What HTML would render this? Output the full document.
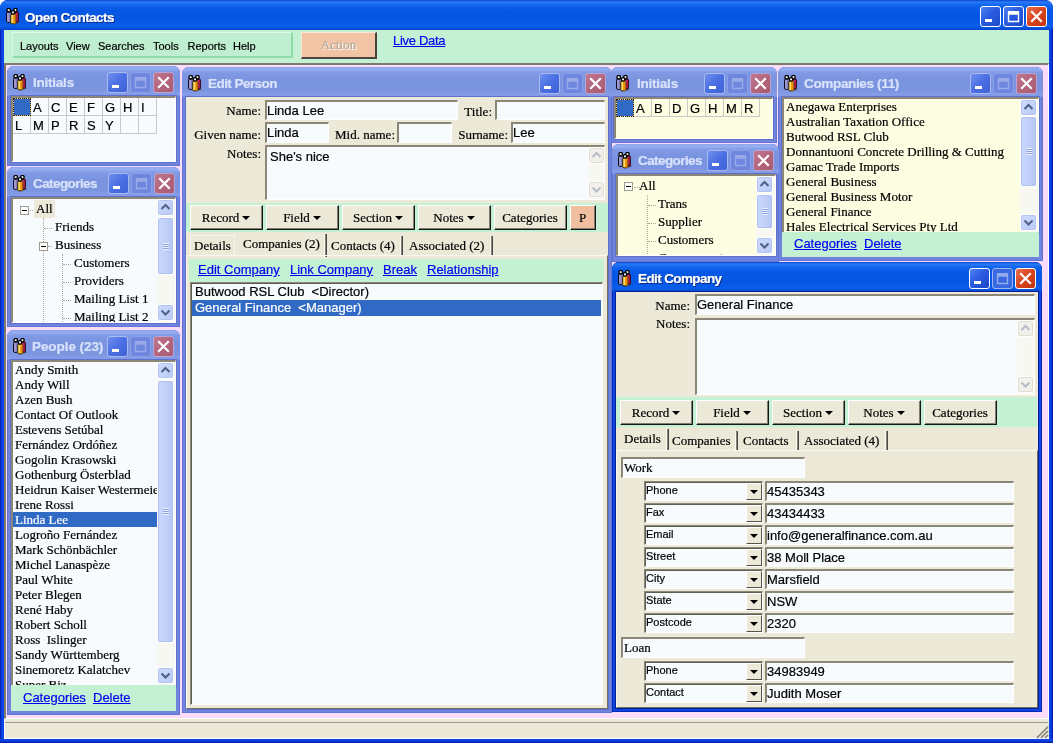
<!DOCTYPE html>
<html>
<head>
<meta charset="utf-8">
<title>Open Contacts</title>
<style>
*{box-sizing:border-box;margin:0;padding:0}
html,body{width:1055px;height:746px;overflow:hidden;background:#fff}
body{font-family:"Liberation Sans",sans-serif;font-size:13px;color:#000;position:relative;-webkit-text-stroke:.2px}
.abs{position:absolute}
#main{will-change:transform;position:absolute;left:0;top:0;width:1053px;height:743px;background:#0a46e0;border-radius:8px 8px 0 0;overflow:hidden}
#mtitle{position:absolute;left:0;top:0;width:1053px;height:30px;background:linear-gradient(#0a44cc 0,#2a7bf8 2px,#1266ee 5px,#0658e4 10px,#0656e2 20px,#0a5fee 26px,#0644cc 30px)}
#lb{position:absolute;left:0;top:30px;width:4px;height:713px;background:linear-gradient(90deg,#0618a0 0,#0a3cdc 1.5px,#0a4cee 3px,#0a40dc 4px)}
#rb{position:absolute;left:1049px;top:30px;width:4px;height:713px;background:linear-gradient(90deg,#0a48f0 0,#0a40e4 1.5px,#0a2cc4 3px,#04129a 4px)}
#bb{position:absolute;left:0;top:739px;width:1053px;height:4px;background:linear-gradient(#0a48f0 0,#0a40e4 1.5px,#0a2cc4 3px,#04129a 4px)}
.cap{position:absolute;font:bold 13.5px "Liberation Sans",sans-serif;white-space:nowrap;letter-spacing:-.55px;color:#fff;text-shadow:1px 1px 0 #0a2a80}
.cb{position:absolute;width:21px;height:21px;border:1px solid #fff;border-radius:3px;background:linear-gradient(135deg,#4f82f0 0,#2a5be0 45%,#1d48c8 100%)}
.cb.x{background:linear-gradient(135deg,#e8704f 0,#d8431c 50%,#c03510 100%)}
.cb svg{position:absolute;left:-1px;top:-1px}
#green{position:absolute;left:4px;top:30px;width:1045px;height:33px;background:#c4f1d4}
#menup{position:absolute;left:12px;top:32px;width:281px;height:26px;background:#c0eed0;border-top:1px solid #dcf9e6;border-left:1px solid #dcf9e6;border-bottom:2px solid #8fdca8;border-right:2px solid #8fdca8}
#menup span{position:absolute;top:7px;font-size:11px;white-space:nowrap}
#mdi{position:absolute;left:4px;top:63px;width:1045px;height:656px;background:#fbdbfa;border-top:2px solid #7d7a70;border-left:2px solid #7d7a70;border-right:1px solid #fff;border-bottom:1px solid #fff}
#status{position:absolute;left:4px;top:719px;width:1045px;height:20px;background:#ece9d8;border-bottom:1px solid #fff;border-left:1px solid #fff}
#status:before{content:"";position:absolute;left:0;top:3px;width:1043px;height:1px;background:#9d9a8c}
/* child windows */
.win{position:absolute;background:#7084de;border-radius:7px 7px 0 0;overflow:hidden;box-shadow:inset 0 0 0 1px #6074d2}
.win.act{background:#0a48e6;box-shadow:inset 0 0 0 1px #0a26b0}
.win .tb{position:absolute;left:0;top:0;right:0;height:30px;background:linear-gradient(#8aa2ea 0,#98b0f2 2px,#8099e4 6px,#7a93df 14px,#7b95e1 24px,#869ee8 28px,#7890e0 30px)}
.win.act .tb{background:linear-gradient(#0a44cc 0,#2a7bf8 2px,#1266ee 5px,#0658e4 10px,#0656e2 20px,#0a5fee 26px,#0644cc 30px)}
.win .cap{color:#d8e2fa;text-shadow:none}
.win.act .cap{color:#fff;text-shadow:1px 1px 0 #0a2a80}
.win .cb{background:linear-gradient(135deg,#6f8fee 0,#4a6fe2 50%,#3f62d6 100%);border-color:#a9baf0}
.win .cb.mx{background:#6e86de;border-color:#8ba1e8}
.win .cb.mx svg{opacity:.3}
.win .cb.x{background:linear-gradient(135deg,#c0788f 0,#b4667d 50%,#a85a72 100%);border-color:#b8a4d4}
.win.act .cb{background:linear-gradient(135deg,#4f82f0 0,#2a5be0 45%,#1d48c8 100%);border-color:#fff}
.win.act .cb.mx{background:#3a68e0;border-color:#9fb8f2}
.win.act .cb.mx svg{opacity:.45}
.win.act .cb.x{background:linear-gradient(135deg,#e8704f 0,#d8431c 50%,#c03510 100%);border-color:#fff}
.body{position:absolute;background:#ece9d8;overflow:hidden}
.sunk{border-top:2px solid #8a8778;border-left:2px solid #8a8778;border-right:1px solid #fff;border-bottom:1px solid #fff;position:absolute}
.sunk:after,.inp:after,.cmb:after{content:'';position:absolute;left:-1px;top:-1px;right:0;bottom:0;border-top:1px solid #5f5c52;border-left:1px solid #5f5c52;pointer-events:none}
.rais{border-right:1px solid #807c70;border-bottom:1px solid #807c70}
.win.act .body{outline:1px solid #0a1c94}
.win .body{outline:1px solid #5e70cc}
.win.act .body{outline:1px solid #0a1c94}
.win .body.mint{outline:none}
.white{background:#f7fbfd}
.yel{background:#fdfde2}
.mint{background:#c4f1d4}
.list{position:absolute;overflow:hidden;font:13px/15px "Liberation Serif",serif;white-space:nowrap}
.list div{height:15px;padding-left:2px}
.sel{background:#316ac5;color:#fff}
.lnk{color:#0000f0;text-decoration:underline;font:13px "Liberation Sans",sans-serif;position:absolute;white-space:nowrap}
/* scrollbar */
.sb{position:absolute;width:18px;background:#f8f8f3}
.sb .a{position:absolute;left:0;width:17px;height:17px;border:1px solid #fff;border-radius:3px;background:linear-gradient(135deg,#d0dcfd,#b9c9f8);box-shadow:0 0 0 1px #b4c4f0 inset}
.sb .t{position:absolute;left:0;width:17px;border:1px solid #fff;border-radius:3px;background:linear-gradient(90deg,#cbd9fd,#b7c7f5);box-shadow:0 0 0 1px #aebff0 inset,-1px -1px 0 0 #98aae6 inset}
.sb svg{position:absolute;left:-1px;top:-1px}
.sb.dis .a{background:#f1f0ea;border-color:#fff;box-shadow:0 0 0 1px #e0ded2 inset}
.sb.dis svg{opacity:.35}
.grip{position:absolute;left:5px;width:6px;height:7px;background:repeating-linear-gradient(#eef3ff 0,#eef3ff 1px,#8da2e0 1px,#8da2e0 2px)}
/* initials grid */
.grid{position:absolute;font:13px/17px "Liberation Sans",sans-serif}
.grid i{position:absolute;width:19px;height:19px;border:1px solid #c8c8c8;font-style:normal;padding-left:2px;padding-top:1px}
.grid i.s{z-index:2;background:#316ac5;border:1px dashed #e8a830;width:18px;height:18px;margin:1px 0 0 1px;background-clip:padding-box;box-shadow:none}
.grid i.s:before{content:'';position:absolute;left:-1px;top:-1px;right:-1px;bottom:-1px;border:1px dotted #222}
/* tree */
.tree{position:absolute;overflow:hidden;font:13px/18px "Liberation Serif",serif;white-space:nowrap}
.tree span{position:absolute}
.tree .pm{position:absolute;width:9px;height:9px;border:1px solid #a09c90;background:#fff}
.tree .pm:after{content:"";position:absolute;left:1px;top:3px;width:5px;height:1px;background:#000}
.tree .h{position:absolute;height:1px;border-top:1px dotted #aaa698}
.tree .v{position:absolute;width:1px;border-left:1px dotted #aaa698}
/* form */
.lbl{position:absolute;font:13px "Liberation Serif",serif;text-align:right;white-space:nowrap}
.inp{position:absolute;background:#f7fbfd;border-top:2px solid #8a8778;border-left:2px solid #8a8778;border-right:1px solid #fff;border-bottom:1px solid #fff;font:13px/18px "Liberation Sans",sans-serif;padding-left:0;white-space:nowrap;overflow:hidden}
.btn{position:absolute;height:25px;background:#ece9d8;border-top:1px solid #fff;border-left:1px solid #fff;border-right:1px solid #161616;border-bottom:1px solid #161616;box-shadow:inset -1px -1px 0 #807c70;font:13px/23px "Liberation Serif",serif;text-align:center;white-space:nowrap;padding-right:1px}
.btn b{display:inline-block;width:0;height:0;border-left:4px solid transparent;border-right:4px solid transparent;border-top:4px solid #000;margin-left:3px;vertical-align:2px}
.tab{position:absolute;font:13px "Liberation Serif",serif;white-space:nowrap}
.tsep{position:absolute;width:3px;background:linear-gradient(90deg,#85827a 0,#85827a 1px,#4e4b44 1px,#4e4b44 2px);border-left:1px solid #fbfaf4}
.tabo{position:absolute;border:1px solid #f8f6ee;border-bottom:none}
.cmb{position:absolute;height:20px;background:#f7fbfd;border-top:2px solid #8a8778;border-left:2px solid #8a8778;border-right:1px solid #fff;border-bottom:1px solid #fff;font:11px/14px "Liberation Sans",sans-serif;padding-left:0}
.cmb u{position:absolute;right:0;top:0;width:16px;height:17px;background:#ece9d8;border-top:1px solid #fff;border-left:1px solid #fff;border-right:1px solid #55524a;border-bottom:1px solid #55524a}
.cmb u:after{content:"";position:absolute;left:3px;top:6px;border-left:4px solid transparent;border-right:4px solid transparent;border-top:4px solid #000}
</style>
</head>
<body>

<svg width="0" height="0" style="position:absolute">
<defs>
<g id="ico">
<path d="M9.5 12 L14 14.2 L10 15.8 L6 15.5 Z" fill="#4a4a4a" opacity=".85"/>
<rect x="0.5" y="4" width="4.6" height="10.4" rx="1.2" fill="#a098d0" stroke="#0a0a1a" stroke-width="1"/>
<rect x="3.2" y="4.5" width="1.8" height="9.6" fill="#7a72b4"/>
<rect x="9" y="4" width="3.4" height="10" rx="1.1" fill="#b81c50" stroke="#2a0410" stroke-width="1"/>
<rect x="9.3" y="5" width="1.2" height="8.6" fill="#d8386c"/>
<rect x="4.8" y="6" width="5" height="9.8" rx="1.2" fill="#f8c010" stroke="#2a1c00" stroke-width="1"/>
<rect x="7.4" y="6.5" width="2.1" height="9" fill="#ea8a10"/>
<rect x="5.6" y="6.8" width="1" height="8.4" fill="#fff0a0"/>
<circle cx="2.7" cy="2.2" r="1.8" fill="#e0e0e0" stroke="#000" stroke-width="1.3"/>
<circle cx="9.4" cy="2.2" r="1.8" fill="#e0e0e0" stroke="#000" stroke-width="1.3"/>
<circle cx="7" cy="4.4" r="1.7" fill="#f4f4f4" stroke="#000" stroke-width="1.3"/>
</g>
<g id="gmin"><rect x="5" y="13" width="7" height="3" fill="#fff"/></g>
<g id="gmax"><path d="M5.5 6.5 H15.5 V15.5 H5.5 Z M5.5 8 H15.5" fill="none" stroke="#fff" stroke-width="1.4"/><rect x="5" y="5" width="11" height="3" fill="#fff"/></g>
<g id="gx"><path d="M6 6 L15 15 M15 6 L6 15" stroke="#fff" stroke-width="2.2" stroke-linecap="square"/></g>
<g id="up"><path d="M4.5 10 L8.5 6 L12.5 10" fill="none" stroke="#4d6185" stroke-width="2"/></g>
<g id="dn"><path d="M4.5 6.5 L8.5 10.5 L12.5 6.5" fill="none" stroke="#4d6185" stroke-width="2"/></g>
</defs>
</svg>

<div id="main">
 <div id="mtitle">
  <svg class="abs" style="left:6px;top:8px" width="17" height="18"><use href="#ico"/></svg>
  <div class="cap" style="left:25px;top:10px;letter-spacing:-.54px">Open Contacts</div>
  <div class="cb" style="left:980px;top:6px;"><svg width="21" height="21"><use href="#gmin"/></svg></div><div class="cb mx" style="left:1003px;top:6px;"><svg width="21" height="21"><use href="#gmax"/></svg></div><div class="cb x" style="left:1026px;top:6px;"><svg width="21" height="21"><use href="#gx"/></svg></div>
 </div>
 <div id="lb"></div><div id="rb"></div><div id="bb"></div>
 <div id="green"></div>
 <div id="menup"><span style="left:7px">Layouts</span><span style="left:53px">View</span><span style="left:85px">Searches</span><span style="left:140px">Tools</span><span style="left:174.5px">Reports</span><span style="left:220px">Help</span></div>
 <div class="abs" style="left:301px;top:32px;width:76px;height:27px;background:#f0c4a4;border-top:1px solid #fbe6d8;border-left:1px solid #fbe6d8;border-right:2px solid #4a443c;border-bottom:2px solid #4a443c;font:13px/24px 'Liberation Serif',serif;text-align:center;color:#b4aa9c;text-shadow:1px 1px 0 #fff">Action</div>
 <div class="lnk" style="left:393px;top:33px;letter-spacing:-.3px">Live Data</div>
 <div id="mdi"></div>
 <div id="status"></div>
 <svg class="abs" style="left:1036px;top:726px" width="13" height="13"><path d="M12 1 L1 12 M12 5 L5 12 M12 9 L9 12" stroke="#8c887a" stroke-width="1.8"/><path d="M12 2.6 L2.6 12 M12 6.6 L6.6 12 M12 10.6 L10.6 12" stroke="#fff" stroke-width=".8"/></svg>
<div class="win" style="left:7px;top:66px;width:173px;height:100px"><div class="tb"><svg class="abs" style="left:6px;top:8px" width="17" height="18"><use href="#ico"/></svg><div class="cap" style="left:26px;top:9px;letter-spacing:-0.23px">Initials</div><div class="cb" style="left:100px;top:6px;"><svg width="21" height="21"><use href="#gmin"/></svg></div><div class="cb mx" style="left:123px;top:6px;"><svg width="21" height="21"><use href="#gmax"/></svg></div><div class="cb x" style="left:146px;top:6px;"><svg width="21" height="21"><use href="#gx"/></svg></div></div><div class="body sunk white" style="left:4px;top:30px;width:165px;height:66px;"><div class="grid" style="left:-1px;top:-1px;"><i class="s" style="left:0px;top:0px"></i><i style="left:18px;top:0px">A</i><i style="left:36px;top:0px">C</i><i style="left:54px;top:0px">E</i><i style="left:72px;top:0px">F</i><i style="left:90px;top:0px">G</i><i style="left:108px;top:0px">H</i><i style="left:126px;top:0px">I</i><i style="left:0px;top:18px">L</i><i style="left:18px;top:18px">M</i><i style="left:36px;top:18px">P</i><i style="left:54px;top:18px">R</i><i style="left:72px;top:18px">S</i><i style="left:90px;top:18px">Y</i><i style="left:108px;top:18px"></i><i style="left:126px;top:18px"></i></div></div></div>
<div class="win" style="left:7px;top:167px;width:173px;height:160px"><div class="tb"><svg class="abs" style="left:6px;top:8px" width="17" height="18"><use href="#ico"/></svg><div class="cap" style="left:26px;top:9px;letter-spacing:-0.58px">Categories</div><div class="cb" style="left:101px;top:6px;"><svg width="21" height="21"><use href="#gmin"/></svg></div><div class="cb mx" style="left:124px;top:6px;"><svg width="21" height="21"><use href="#gmax"/></svg></div><div class="cb x" style="left:147px;top:6px;"><svg width="21" height="21"><use href="#gx"/></svg></div></div><div class="body sunk white" style="left:4px;top:30px;width:165px;height:126px;"><div class="tree" style="left:0px;top:0px;width:145px;height:123px;"><div class="v" style="left:30px;top:19px;width:1px;height:112px;"></div><div class="v" style="left:49px;top:55px;width:1px;height:76px;"></div><div class="h" style="left:17px;top:11px;width:5px;height:1px;"></div><div class="h" style="left:31px;top:29px;width:8px;height:1px;"></div><div class="h" style="left:35px;top:47px;width:4px;height:1px;"></div><div class="h" style="left:50px;top:65px;width:8px;height:1px;"></div><div class="h" style="left:50px;top:83px;width:8px;height:1px;"></div><div class="h" style="left:50px;top:101px;width:8px;height:1px;"></div><div class="h" style="left:50px;top:119px;width:8px;height:1px;"></div><div class="pm" style="left:7px;top:7px;"></div><div class="pm" style="left:26px;top:43px;"></div><span style="left:21px;top:1px;background:#ece9d8;padding:0 2px;height:18px">All</span><span style="left:42px;top:19px">Friends</span><span style="left:42px;top:37px">Business</span><span style="left:61px;top:55px">Customers</span><span style="left:61px;top:73px">Providers</span><span style="left:61px;top:91px">Mailing List 1</span><span style="left:61px;top:109px">Mailing List 2</span></div><div class="sb" style="left:144px;top:0px;width:18px;height:123px;"><div class="a" style="left:0px;top:0px;"><svg width="17" height="17"><use href="#up"/></svg></div><div class="t" style="left:0px;top:18px;width:17px;height:58px;"><div class="grip" style="top:25px"></div></div><div class="a" style="left:0px;top:105px;"><svg width="17" height="17"><use href="#dn"/></svg></div></div></div></div>
<div class="win" style="left:7px;top:330px;width:173px;height:385px"><div class="tb"><svg class="abs" style="left:6px;top:8px" width="17" height="18"><use href="#ico"/></svg><div class="cap" style="left:25px;top:9px;letter-spacing:-0.07px">People (23)</div><div class="cb" style="left:100px;top:6px;"><svg width="21" height="21"><use href="#gmin"/></svg></div><div class="cb mx" style="left:123px;top:6px;"><svg width="21" height="21"><use href="#gmax"/></svg></div><div class="cb x" style="left:146px;top:6px;"><svg width="21" height="21"><use href="#gx"/></svg></div></div><div class="body sunk white" style="left:4px;top:30px;width:165px;height:326px;"><div class="list" style="left:0px;top:0px;width:144px;height:323px;"><div>Andy Smith</div><div>Andy Will</div><div>Azen Bush</div><div>Contact Of Outlook</div><div>Estevens Setúbal</div><div>Fernández Ordóñez</div><div>Gogolin Krasowski</div><div>Gothenburg Österblad</div><div>Heidrun Kaiser Westermeier</div><div>Irene Rossi</div><div class=sel>Linda Lee</div><div>Logroño Fernández</div><div>Mark Schönbächler</div><div>Michel Lanaspèze</div><div>Paul White</div><div>Peter Blegen</div><div>René Haby</div><div>Robert Scholl</div><div>Ross&nbsp; Islinger</div><div>Sandy Württemberg</div><div>Sinemoretz Kalatchev</div><div>Super Biz</div></div><div class="sb" style="left:144px;top:0px;width:18px;height:323px;"><div class="a" style="left:0px;top:0px;"><svg width="17" height="17"><use href="#up"/></svg></div><div class="t" style="left:0px;top:18px;width:17px;height:263px;"><div class="grip" style="top:127px"></div></div><div class="a" style="left:0px;top:305px;"><svg width="17" height="17"><use href="#dn"/></svg></div></div></div><div class="body mint" style="left:4px;top:355px;width:165px;height:26px;"><div class="lnk" style="left:12px;top:5px;">Categories</div><div class="lnk" style="left:82px;top:5px;">Delete</div></div></div>
<div class="win" style="left:182px;top:67px;width:430px;height:646px"><div class="tb"><svg class="abs" style="left:6px;top:8px" width="17" height="18"><use href="#ico"/></svg><div class="cap" style="left:26px;top:9px;letter-spacing:-0.55px">Edit Person</div><div class="cb" style="left:357px;top:6px;"><svg width="21" height="21"><use href="#gmin"/></svg></div><div class="cb mx" style="left:380px;top:6px;"><svg width="21" height="21"><use href="#gmax"/></svg></div><div class="cb x" style="left:403px;top:6px;"><svg width="21" height="21"><use href="#gx"/></svg></div></div><div class="body" style="left:4px;top:30px;width:422px;height:612px;"><div class="lbl" style="left:-15px;width:90px;top:6px">Name:</div><div class="inp" style="left:79px;top:3px;width:193px;height:20px;">Linda Lee</div><div class="lbl" style="left:216px;width:90px;top:7px">Title:</div><div class="inp" style="left:309px;top:3px;width:110px;height:20px;"></div><div class="lbl" style="left:-15px;width:90px;top:30px">Given name:</div><div class="inp" style="left:79px;top:25px;width:64px;height:21px;">Linda</div><div class="lbl" style="left:119px;width:90px;top:30px">Mid. name:</div><div class="inp" style="left:211px;top:25px;width:55px;height:21px;"></div><div class="lbl" style="left:232px;width:90px;top:30px">Surname:</div><div class="inp" style="left:325px;top:25px;width:94px;height:21px;">Lee</div><div class="lbl" style="left:-15px;width:90px;top:49px">Notes:</div><div class="inp" style="left:79px;top:48px;width:340px;height:55px;padding-left:3px;padding-top:1px">She's nice<div class="sb dis" style="left:321px;top:0px;width:18px;height:52px;"><div class="a" style="left:0px;top:0px;"><svg width="17" height="17"><use href="#up"/></svg></div><div class="a" style="left:0px;top:34px;"><svg width="17" height="17"><use href="#dn"/></svg></div></div></div><div class="abs mint" style="left:0px;top:106px;width:422px;height:29px;"></div><div class="btn" style="left:4px;top:108px;width:73px;height:25px;">Record<b></b></div><div class="btn" style="left:80px;top:108px;width:73px;height:25px;">Field<b></b></div><div class="btn" style="left:156px;top:108px;width:73px;height:25px;">Section<b></b></div><div class="btn" style="left:232px;top:108px;width:73px;height:25px;">Notes<b></b></div><div class="btn" style="left:308px;top:108px;width:73px;height:25px;">Categories</div><div class="btn" style="left:384px;top:108px;width:26px;height:25px;background:#f0bfa0">P</div><div class="tabo" style="left:4px;top:138px;width:45px;height:21px;"></div><div class="tab" style="left:8px;top:141px;">Details</div><div class="tab" style="left:57px;top:139px;">Companies (2)</div><div class="tsep" style="left:138px;top:137px;width:3px;height:23px;"></div><div class="tab" style="left:145px;top:141px;">Contacts (4)</div><div class="tsep" style="left:214px;top:139px;width:3px;height:20px;"></div><div class="tab" style="left:223px;top:141px;">Associated (2)</div><div class="tsep" style="left:304px;top:139px;width:3px;height:20px;"></div><div class="abs" style="left:0px;top:158px;width:422px;height:454px;border-top:1px solid #f8f7f0;border-left:1px solid #f8f7f0;border-right:1px solid #716e62;border-bottom:1px solid #716e62"></div><div class="abs mint" style="left:3px;top:162px;width:415px;height:23px;"></div><div class="lnk" style="left:12px;top:165px;">Edit Company</div><div class="lnk" style="left:104px;top:165px;">Link Company</div><div class="lnk" style="left:197px;top:165px;">Break</div><div class="lnk" style="left:241px;top:165px;">Relationship</div><div class="abs sunk white" style="left:4px;top:185px;width:413px;height:423px;font:13px/16px 'Liberation Sans',sans-serif;white-space:nowrap"><div style="padding-left:3px;height:16px">Butwood RSL Club&nbsp; &lt;Director)</div><div class="sel" style="padding-left:3px;height:16px;width:409px">General Finance&nbsp; &lt;Manager)</div></div></div></div>
<div class="win" style="left:611px;top:67px;width:166px;height:76px"><div class="tb"><svg class="abs" style="left:5px;top:8px" width="17" height="18"><use href="#ico"/></svg><div class="cap" style="left:26px;top:9px;letter-spacing:-0.23px">Initials</div><div class="cb" style="left:93px;top:6px;"><svg width="21" height="21"><use href="#gmin"/></svg></div><div class="cb mx" style="left:116px;top:6px;"><svg width="21" height="21"><use href="#gmax"/></svg></div><div class="cb x" style="left:139px;top:6px;"><svg width="21" height="21"><use href="#gx"/></svg></div></div><div class="body sunk yel" style="left:3px;top:30px;width:159px;height:42px;"><div class="grid" style="left:-1px;top:-1px;"><i class="s" style="left:0px;top:0px"></i><i style="left:18px;top:0px">A</i><i style="left:36px;top:0px">B</i><i style="left:54px;top:0px">D</i><i style="left:72px;top:0px">G</i><i style="left:90px;top:0px">H</i><i style="left:108px;top:0px">M</i><i style="left:126px;top:0px">R</i></div></div></div>
<div class="win" style="left:778px;top:67px;width:265px;height:194px"><div class="tb"><svg class="abs" style="left:6px;top:8px" width="17" height="18"><use href="#ico"/></svg><div class="cap" style="left:26px;top:9px;letter-spacing:-0.34px">Companies (11)</div><div class="cb" style="left:192px;top:6px;"><svg width="21" height="21"><use href="#gmin"/></svg></div><div class="cb mx" style="left:215px;top:6px;"><svg width="21" height="21"><use href="#gmax"/></svg></div><div class="cb x" style="left:238px;top:6px;"><svg width="21" height="21"><use href="#gx"/></svg></div></div><div class="body sunk yel" style="left:4px;top:30px;width:257px;height:136px;"><div class="list" style="left:0px;top:0px;width:237px;height:134px;"><div>Anegawa Enterprises</div><div>Australian Taxation Office</div><div>Butwood RSL Club</div><div>Donnantuoni Concrete Drilling &amp; Cutting</div><div>Gamac Trade Imports</div><div>General Business</div><div>General Business Motor</div><div>General Finance</div><div>Hales Electrical Services Pty Ltd</div></div><div class="sb" style="left:236px;top:0px;width:18px;height:133px;"><div class="a" style="left:0px;top:0px;"><svg width="17" height="17"><use href="#up"/></svg></div><div class="t" style="left:0px;top:17px;width:17px;height:71px;"><div class="grip" style="top:31px"></div></div><div class="a" style="left:0px;top:115px;"><svg width="17" height="17"><use href="#dn"/></svg></div></div></div><div class="body mint" style="left:4px;top:165px;width:257px;height:25px;"><div class="lnk" style="left:12px;top:4px;">Categories</div><div class="lnk" style="left:82px;top:4px;">Delete</div></div></div>
<div class="win" style="left:612px;top:144px;width:167px;height:118px"><div class="tb"><svg class="abs" style="left:6px;top:8px" width="17" height="18"><use href="#ico"/></svg><div class="cap" style="left:26px;top:9px;letter-spacing:-0.58px">Categories</div><div class="cb" style="left:95px;top:6px;"><svg width="21" height="21"><use href="#gmin"/></svg></div><div class="cb mx" style="left:118px;top:6px;"><svg width="21" height="21"><use href="#gmax"/></svg></div><div class="cb x" style="left:141px;top:6px;"><svg width="21" height="21"><use href="#gx"/></svg></div></div><div class="body sunk yel" style="left:4px;top:30px;width:160px;height:82px;"><div class="tree" style="left:0px;top:0px;width:138px;height:80px;"><div class="v" style="left:29px;top:19px;width:1px;height:75px;"></div><div class="h" style="left:16px;top:11px;width:6px;height:1px;"></div><div class="h" style="left:30px;top:29px;width:8px;height:1px;"></div><div class="h" style="left:30px;top:47px;width:8px;height:1px;"></div><div class="h" style="left:30px;top:65px;width:8px;height:1px;"></div><div class="h" style="left:30px;top:83px;width:8px;height:1px;"></div><div class="pm" style="left:6px;top:6px;"></div><span style="left:21px;top:1px">All</span><span style="left:40px;top:19px">Trans</span><span style="left:40px;top:37px">Supplier</span><span style="left:40px;top:55px">Customers</span><span style="left:40px;top:73px">Government</span></div><div class="sb" style="left:138px;top:0px;width:18px;height:79px;"><div class="a" style="left:0px;top:0px;"><svg width="17" height="17"><use href="#up"/></svg></div><div class="t" style="left:0px;top:18px;width:17px;height:35px;"><div class="grip" style="top:13px"></div></div><div class="a" style="left:0px;top:61px;"><svg width="17" height="17"><use href="#dn"/></svg></div></div></div></div>
<div class="win act" style="left:612px;top:262px;width:430px;height:450px"><div class="tb"><svg class="abs" style="left:6px;top:8px" width="17" height="18"><use href="#ico"/></svg><div class="cap" style="left:26px;top:9px;letter-spacing:-0.61px">Edit Company</div><div class="cb" style="left:357px;top:6px;"><svg width="21" height="21"><use href="#gmin"/></svg></div><div class="cb mx" style="left:380px;top:6px;"><svg width="21" height="21"><use href="#gmax"/></svg></div><div class="cb x" style="left:403px;top:6px;"><svg width="21" height="21"><use href="#gx"/></svg></div></div><div class="body" style="left:4px;top:30px;width:422px;height:416px;"><div class="lbl" style="left:-16px;width:90px;top:6px">Name:</div><div class="inp" style="left:79px;top:2px;width:340px;height:21px;">General Finance</div><div class="lbl" style="left:-16px;width:90px;top:24px">Notes:</div><div class="inp" style="left:79px;top:26px;width:340px;height:77px;"><div class="sb dis" style="left:320px;top:0px;width:18px;height:74px;"><div class="a" style="left:0px;top:0px;"><svg width="17" height="17"><use href="#up"/></svg></div><div class="a" style="left:0px;top:56px;"><svg width="17" height="17"><use href="#dn"/></svg></div></div></div><div class="abs mint" style="left:0px;top:105px;width:421px;height:30px;"></div><div class="btn" style="left:4px;top:108px;width:73px;height:25px;">Record<b></b></div><div class="btn" style="left:80px;top:108px;width:73px;height:25px;">Field<b></b></div><div class="btn" style="left:156px;top:108px;width:73px;height:25px;">Section<b></b></div><div class="btn" style="left:232px;top:108px;width:73px;height:25px;">Notes<b></b></div><div class="btn" style="left:308px;top:108px;width:73px;height:25px;">Categories</div><div class="tab" style="left:8px;top:139px;">Details</div><div class="tsep" style="left:50px;top:137px;width:3px;height:22px;"></div><div class="tab" style="left:56px;top:141px;">Companies</div><div class="tsep" style="left:119px;top:139px;width:3px;height:19px;"></div><div class="tab" style="left:127px;top:141px;">Contacts</div><div class="tsep" style="left:180px;top:139px;width:3px;height:19px;"></div><div class="tab" style="left:188px;top:141px;">Associated (4)</div><div class="tsep" style="left:269px;top:139px;width:3px;height:19px;"></div><div class="abs" style="left:0px;top:158px;width:422px;height:258px;border-top:1px solid #f8f7f0;border-left:1px solid #f8f7f0;border-right:1px solid #716e62;border-bottom:1px solid #716e62"></div><div class="inp" style="left:5px;top:165px;width:184px;height:21px;font-family:'Liberation Serif',serif;padding-left:1px">Work</div><div class="inp" style="left:5px;top:345px;width:184px;height:21px;font-family:'Liberation Serif',serif;padding-left:1px">Loan</div><div class="cmb" style="left:28px;top:189px;width:119px;height:20px;">Phone<u></u></div><div class="inp" style="left:149px;top:189px;width:249px;height:20px;">45435343</div><div class="cmb" style="left:28px;top:211px;width:119px;height:20px;">Fax<u></u></div><div class="inp" style="left:149px;top:211px;width:249px;height:20px;">43434433</div><div class="cmb" style="left:28px;top:233px;width:119px;height:20px;">Email<u></u></div><div class="inp" style="left:149px;top:233px;width:249px;height:20px;">info@generalfinance.com.au</div><div class="cmb" style="left:28px;top:255px;width:119px;height:20px;">Street<u></u></div><div class="inp" style="left:149px;top:255px;width:249px;height:20px;">38 Moll Place</div><div class="cmb" style="left:28px;top:277px;width:119px;height:20px;">City<u></u></div><div class="inp" style="left:149px;top:277px;width:249px;height:20px;">Marsfield</div><div class="cmb" style="left:28px;top:299px;width:119px;height:20px;">State<u></u></div><div class="inp" style="left:149px;top:299px;width:249px;height:20px;">NSW</div><div class="cmb" style="left:28px;top:321px;width:119px;height:20px;">Postcode<u></u></div><div class="inp" style="left:149px;top:321px;width:249px;height:20px;">2320</div><div class="cmb" style="left:28px;top:369px;width:119px;height:20px;">Phone<u></u></div><div class="inp" style="left:149px;top:369px;width:249px;height:20px;">34983949</div><div class="cmb" style="left:28px;top:391px;width:119px;height:20px;">Contact<u></u></div><div class="inp" style="left:149px;top:391px;width:249px;height:20px;">Judith Moser</div></div></div>

</div>
</body>
</html>
